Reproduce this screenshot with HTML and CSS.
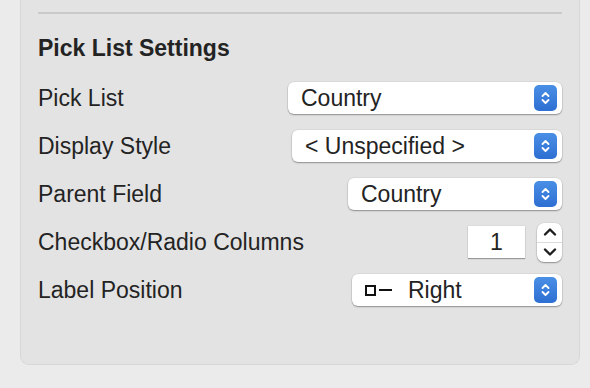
FILE: index.html
```html
<!DOCTYPE html>
<html lang="en">
<head>
  <meta charset="UTF-8" />
  <title>Pick List Settings</title>
  <link rel="stylesheet" href="styles.css">
</head>
<body>

  <div class="panel">
    <div class="divider"></div>
    <h2 class="title">Pick List Settings</h2>

    <!-- Pick List -->
    <div class="row">
      <span class="label">Pick List</span>
      <div class="popup popup-pick">
        <span class="popup-text">Country</span>
        <span class="popup-btn">
          <svg width="11" height="16" viewBox="0 0 11 16"><path d="M2.5 6 L5.5 3 L8.5 6 M2.5 10 L5.5 13 L8.5 10" fill="none" stroke="#fff" stroke-width="1.8" stroke-linecap="round" stroke-linejoin="round"/></svg>
        </span>
      </div>
    </div>

    <!-- Display Style -->
    <div class="row">
      <span class="label">Display Style</span>
      <div class="popup popup-display">
        <span class="popup-text">&lt; Unspecified &gt;</span>
        <span class="popup-btn">
          <svg width="11" height="16" viewBox="0 0 11 16"><path d="M2.5 6 L5.5 3 L8.5 6 M2.5 10 L5.5 13 L8.5 10" fill="none" stroke="#fff" stroke-width="1.8" stroke-linecap="round" stroke-linejoin="round"/></svg>
        </span>
      </div>
    </div>

    <!-- Parent Field -->
    <div class="row">
      <span class="label">Parent Field</span>
      <div class="popup popup-parent">
        <span class="popup-text">Country</span>
        <span class="popup-btn">
          <svg width="11" height="16" viewBox="0 0 11 16"><path d="M2.5 6 L5.5 3 L8.5 6 M2.5 10 L5.5 13 L8.5 10" fill="none" stroke="#fff" stroke-width="1.8" stroke-linecap="round" stroke-linejoin="round"/></svg>
        </span>
      </div>
    </div>

    <!-- Columns -->
    <div class="row">
      <span class="label">Checkbox/Radio Columns</span>
      <div class="stepper-group">
        <div class="number-field">1</div>
        <div class="stepper">
          <span class="step step-up">
            <svg width="16" height="12" viewBox="0 0 16 12"><path d="M3 8.5 L8 3.5 L13 8.5" fill="none" stroke="#1e1e1e" stroke-width="2.4" stroke-linecap="round" stroke-linejoin="round"/></svg>
          </span>
          <span class="step step-down">
            <svg width="16" height="12" viewBox="0 0 16 12"><path d="M3 3.5 L8 8.5 L13 3.5" fill="none" stroke="#1e1e1e" stroke-width="2.4" stroke-linecap="round" stroke-linejoin="round"/></svg>
          </span>
        </div>
      </div>
    </div>

    <!-- Label Position -->
    <div class="row">
      <span class="label">Label Position</span>
      <div class="popup popup-position">
        <span class="popup-text">
          <span class="pos-icon"><span class="pos-box"></span><span class="pos-dash"></span></span>Right
        </span>
        <span class="popup-btn">
          <svg width="11" height="16" viewBox="0 0 11 16"><path d="M2.5 6 L5.5 3 L8.5 6 M2.5 10 L5.5 13 L8.5 10" fill="none" stroke="#fff" stroke-width="1.8" stroke-linecap="round" stroke-linejoin="round"/></svg>
        </span>
      </div>
    </div>
  </div>

</body>
</html>
```

FILE: styles.css
```css
body {
  margin: 0;
  background: #ebebeb;
  font-family: "Liberation Sans", Arial, sans-serif;
  color: #232323;
}

/* Panel */
.panel {
  margin: 0 10px 0 20px;
  height: 365px;
  box-sizing: border-box;
  padding: 12px 18px 0 18px;
  background: #e3e3e3;
  border: 1px solid #d7d7d7;
  border-top: none;
  border-radius: 0 0 9px 9px;
}
.divider {
  height: 2px;
  background: #cacaca;
  margin: 0 -1px;
}
.title {
  margin: 20px 0 12px -1px;
  font-size: 23px;
  line-height: 28px;
  font-weight: bold;
}

/* Rows */
.row {
  display: flex;
  align-items: center;
  justify-content: space-between;
  height: 48px;
  margin-left: -1px;
  margin-right: -1px;
}
.label {
  font-size: 23px;
  line-height: 28px;
}

/* Popup buttons */
.popup {
  display: flex;
  align-items: center;
  justify-content: space-between;
  height: 32px;
  box-sizing: border-box;
  padding: 0 5px 0 13px;
  background: #fff;
  border-radius: 6px;
  box-shadow: 0 0 0 0.5px rgba(0, 0, 0, 0.08), 0 1px 1.5px rgba(0, 0, 0, 0.35);
}
.popup-pick { width: 274px; }
.popup-display { width: 270px; }
.popup-parent { width: 214px; }
.popup-position { width: 210px; }

.popup-text {
  display: flex;
  align-items: center;
  font-size: 23px;
  line-height: 28px;
}
.popup-btn {
  display: flex;
  align-items: center;
  justify-content: center;
  width: 23px;
  height: 26px;
  border-radius: 5px;
  background: linear-gradient(#4a8fe6, #2d6fd2);
}

/* Label position icon */
.pos-icon {
  display: inline-flex;
  align-items: center;
  margin-right: 16px;
}
.pos-box {
  flex-shrink: 0;
  width: 11px;
  height: 11px;
  border: 2px solid #111;
  box-sizing: border-box;
}
.pos-dash {
  flex-shrink: 0;
  width: 13px;
  height: 2px;
  margin-left: 3px;
  background: #111;
}

/* Number stepper */
.stepper-group {
  display: flex;
  align-items: center;
  gap: 12px;
}
.number-field {
  width: 57px;
  height: 32px;
  box-sizing: border-box;
  background: #fff;
  text-align: center;
  font-size: 23px;
  line-height: 32px;
  box-shadow: 0 0 0 0.5px rgba(0, 0, 0, 0.06), 0 1px 1px rgba(0, 0, 0, 0.3);
}
.stepper {
  display: flex;
  flex-direction: column;
  width: 25px;
  height: 39px;
  background: #fff;
  border-radius: 7px;
  box-shadow: 0 0 0 0.5px rgba(0, 0, 0, 0.08), 0 1px 1.5px rgba(0, 0, 0, 0.35);
}
.step {
  flex: 1;
  display: flex;
  align-items: center;
  justify-content: center;
}
.step-up {
  border-bottom: 1px solid #dcdcdc;
}
```
